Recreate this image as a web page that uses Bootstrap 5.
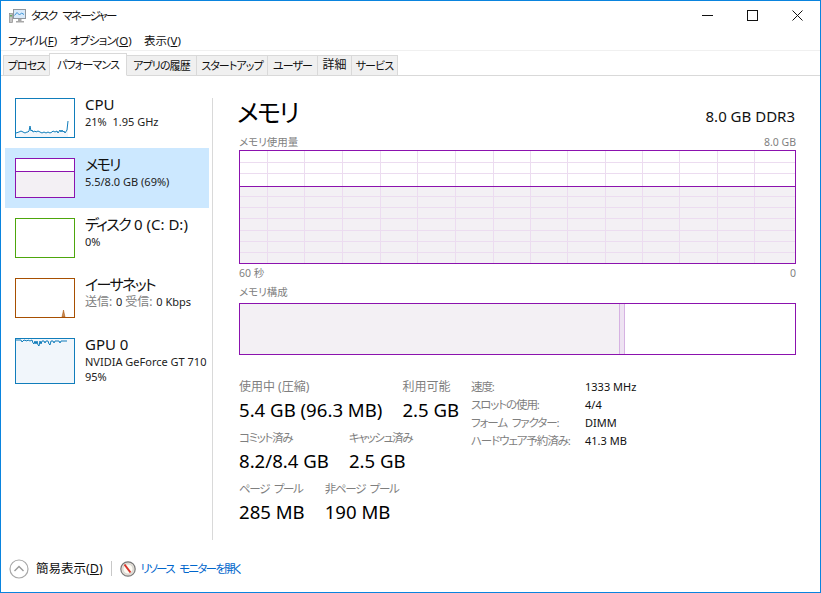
<!DOCTYPE html>
<html lang="ja">
<head>
<meta charset="utf-8">
<title>タスク マネージャー</title>
<link href="https://cdn.jsdelivr.net/npm/bootstrap@5.3.0/dist/css/bootstrap.min.css" rel="stylesheet">
<style>
html,body{margin:0;height:100%;overflow:hidden;background:#fff}
body{font-family:"Noto Sans","Noto Sans CJK JP",sans-serif;font-size:12px;color:#111;font-feature-settings:"palt";line-height:1.2}
.tm-window{width:821px;height:593px;border:1px solid #0a84de;display:flex;flex-direction:column}
.tm-title{height:29px;padding-left:8px;gap:4px;flex:none}
.tm-title-text{font-size:11.5px;letter-spacing:-1.8px;word-spacing:5px}
.tm-winbtns{margin-left:auto;gap:34px;padding-right:17px;padding-bottom:1px}
.tm-menu{height:20px;padding:2px 0 0 7px;gap:12.5px;flex:none;font-size:11.5px}
.tm-menu .tm-k1{letter-spacing:-.9px}
.tm-menu u{text-underline-offset:1px}
.tm-tabs{height:26px;flex:none;padding:2px 0 0 2px;border-top:1px solid #f0f0f0;margin:0;flex-wrap:nowrap;align-items:flex-start;position:relative}
.tm-tabs::after{content:"";position:absolute;left:0;right:0;bottom:0;height:1px;background:#d9d9d9}
.tm-tab{height:21px;margin-top:2px;background:#f0f0f0;border:1px solid #d9d9d9;border-left-width:0;display:flex;align-items:center;justify-content:center;font-size:11px;letter-spacing:-.9px;white-space:nowrap;position:relative}
.tm-tab:first-child{border-left-width:1px}
.tm-tab.tm-on{background:#fff;height:23px;margin-top:0;border-left-width:1px;border-bottom-color:#fff;z-index:1;margin-left:-1px}
.tm-w1{width:47px}.tm-w2{width:78px}.tm-w3{width:70px}.tm-w4{width:71px}.tm-w5{width:50px}.tm-w6{width:34px;letter-spacing:0;font-size:12px}.tm-w7{width:46px}
.tm-body{flex:1;display:flex;min-height:0}
.tm-side{width:207px;flex:none;margin:12px 0 0 4px}
.tm-divider{width:1px;flex:none;height:442px;margin:22px 0 0 0;background:#d9d9d9}
.tm-item{width:204px;height:60px;display:flex;padding:10px 0 0 10px;gap:10px}
.tm-item.tm-sel{background:#cce8ff}
.tm-item.tm-tall{height:66px}
.tm-item svg{flex:none;display:block}
.tm-name{font-size:15px;line-height:18px;margin-top:-3px;white-space:nowrap}
.tm-kn{letter-spacing:-1.6px}
.tm-sub{font-size:11px;line-height:15px;white-space:nowrap;color:#222;margin-top:1px}
.tm-sub .tm-dim{color:#7f7f7f;font-size:12px;margin-right:1px}
.tm-main{flex:1;padding:20px 0 0 26px;min-width:0}
.tm-col{width:557px}
.tm-head{height:32px}
.tm-h1{font-size:25px;line-height:32px;margin:0 0 0 -2px;font-weight:400;color:#000;letter-spacing:-1.8px}
.tm-model{font-size:15px;line-height:20px;color:#111;padding:0 1px 2px 0}
.tm-lab{font-size:10.5px;line-height:14px;color:#7f7f7f}
.tm-lab1{margin-top:5px;height:17px;align-items:center}
.tm-lab2{height:18px;align-items:center}
.tm-lab3{height:21px;line-height:20px}
.tm-chart{display:block;margin:0}
.tm-stats{margin-top:24px}
.tm-left{width:232px;flex:none}
.tm-srow{display:flex;gap:20px;height:51px;white-space:nowrap}
.tm-srow .tm-lab{font-size:12px;line-height:16px}
.tm-srow .tm-lab.tm-kt{font-size:11.5px;letter-spacing:-1.3px;word-spacing:3px}
.tm-val{font-size:18.6px;line-height:26px;color:#000;margin-top:2px}
.tm-spec{display:grid;grid-template-columns:114px auto;font-size:11px;line-height:18px;height:72px;margin-top:-1px}
.tm-spec .tm-k{color:#7f7f7f;font-size:11.5px;letter-spacing:-1.1px;word-spacing:3px;white-space:nowrap}
.tm-foot{height:47px;flex:none;padding-left:8px;font-size:12px}
.tm-less{font-size:12.5px;color:#111;margin-left:7px}
.tm-sep{width:1px;height:15px;background:#c8c8c8;margin:0 8px}
.tm-link{color:#0066cc;text-decoration:none;margin-left:5px;white-space:nowrap;letter-spacing:-1.7px;word-spacing:4px;font-size:11.5px}
</style>
</head>
<body>
<div class="tm-window">
  <div class="tm-title d-flex align-items-center">
    <svg width="18" height="17" viewBox="0 0 18 17"><rect x=".5" y="6.500" width="3" height="9" fill="#c4c4c4" stroke="#8a8a8a" stroke-width=".7"/><rect x="1.200" y="8" width="1.600" height="1.500" fill="#4aa54a"/><rect x="4.500" y="2.500" width="12" height="9" fill="#d9eafa" stroke="#8f979e"/><path d="M5.500 8.500l2.500-3 2.500 2.500 2-2 2.500 1.500" fill="none" stroke="#3c94d8"/><path d="M9 12h3.500v2H15v1.500H7V14h2z" fill="#a8a8a8"/></svg>
    <span class="tm-title-text">タスク マネージャー</span>
    <div class="tm-winbtns d-flex align-items-center">
      <svg width="11" height="11" viewBox="0 0 11 11"><path d="M0 5.500h11" stroke="#111"/></svg>
      <svg width="11" height="11" viewBox="0 0 11 11"><rect x=".5" y=".5" width="10" height="10" fill="none" stroke="#111"/></svg>
      <svg width="11" height="11" viewBox="0 0 11 11"><path d="M.5.500l10 10M10.500.500l-10 10" stroke="#111"/></svg>
    </div>
  </div>
  <div class="tm-menu d-flex align-items-center">
    <span><span class="tm-k1">ファイル</span>(<u>F</u>)</span><span><span class="tm-k1">オプション</span>(<u>O</u>)</span><span>表示(<u>V</u>)</span>
  </div>
  <div class="tm-tabs nav">
    <div class="tm-tab tm-w1">プロセス</div>
    <div class="tm-tab tm-on tm-w2">パフォーマンス</div>
    <div class="tm-tab tm-w3">アプリの履歴</div>
    <div class="tm-tab tm-w4">スタートアップ</div>
    <div class="tm-tab tm-w5">ユーザー</div>
    <div class="tm-tab tm-w6">詳細</div>
    <div class="tm-tab tm-w7">サービス</div>
  </div>
  <div class="tm-body">
    <div class="tm-side">
      <div class="tm-item">
        <svg width="60" height="40" viewBox="0 0 60 40"><path d="M1 35l3-1 2-1 2 1 2 1 2-1 1 0 1-1 1-5 1 5 1-1 1 2 2-1 1 1 2-1 2 1 2 1 2-1 2 1 2-1 2 1 2-1 1-1 2 1 2-1 1 2 2-3 1 2 1-2 1 2 1-1 1 2 2-3 1-9V39H1z" fill="#f1f6fb"/><path d="M1 35l3-1 2-1 2 1 2 1 2-1 1 0 1-1 1-5 1 5 1-1 1 2 2-1 1 1 2-1 2 1 2 1 2-1 2 1 2-1 2 1 2-1 1-1 2 1 2-1 1 2 2-3 1 2 1-2 1 2 1-1 1 2 2-3 1-9" fill="none" stroke="#117dbb"/><rect x=".5" y=".5" width="59" height="39" fill="none" stroke="#117dbb" /></svg>
        <div><div class="tm-name">CPU</div><div class="tm-sub">21%&nbsp; 1.95 GHz</div></div>
      </div>
      <div class="tm-item tm-sel">
        <svg width="60" height="40" viewBox="0 0 60 40"><rect x=".5" y=".5" width="59" height="39" fill="#fff" stroke="#8b12ae"/><rect x="1" y="13" width="58" height="26" fill="#f3f0f4"/><path d="M0 13.500h60" stroke="#8b12ae"/></svg>
        <div><div class="tm-name"><span class="tm-kn">メモリ</span></div><div class="tm-sub">5.5/8.0 GB (69%)</div></div>
      </div>
      <div class="tm-item">
        <svg width="60" height="40" viewBox="0 0 60 40"><rect x=".5" y=".5" width="59" height="39" fill="#fff" stroke="#4da60c"/></svg>
        <div><div class="tm-name"><span class="tm-kn">ディスク</span> 0 (C: D:)</div><div class="tm-sub">0%</div></div>
      </div>
      <div class="tm-item">
        <svg width="60" height="40" viewBox="0 0 60 40"><rect x=".5" y=".5" width="59" height="39" fill="#fff" stroke="#a74f01"/><path d="M47 39l1.500-7 1.500 7z" fill="#c98a55" stroke="#a74f01" stroke-width=".5"/></svg>
        <div><div class="tm-name"><span class="tm-kn">イーサネット</span></div><div class="tm-sub"><span class="tm-dim">送信:</span> 0 <span class="tm-dim">受信:</span> 0 Kbps</div></div>
      </div>
      <div class="tm-item tm-tall">
        <svg width="60" height="46" viewBox="0 0 60 46"><rect x=".5" y=".5" width="59" height="45" fill="#f1f6fb" stroke="#117dbb"/><path d="M1 2l3 0 2 0 1 2 2-2 3 1 1-1 2 1 2-1 1 3 1 1 1-3 1 3 1-3 1 4 1 1 1-5 1 3 1-3 2 0 1 2 1-2 2 0 1 3 1 1 1-4 2 0 1 2 1-2 4 0 1 2 1-2 4 0 2 0" fill="none" stroke="#117dbb"/></svg>
        <div><div class="tm-name">GPU 0</div><div class="tm-sub">NVIDIA GeForce GT 710<br>95%</div></div>
      </div>
    </div>
    <div class="tm-divider"></div>
    <div class="tm-main">
      <div class="tm-col">
        <div class="tm-head d-flex justify-content-between align-items-end">
          <h1 class="tm-h1">メモリ</h1><div class="tm-model">8.0 GB DDR3</div>
        </div>
        <div class="d-flex justify-content-between tm-lab tm-lab1"><span>メモリ使用量</span><span>8.0 GB</span></div>
        <svg class="tm-chart" width="557" height="114" viewBox="0 0 557 114">
          <rect x="0" y="36" width="557" height="78" fill="#f3f0f4"/>
          <path d="M28.500 0V114M65.500 0V114M103.500 0V114M141.500 0V114M178.500 0V114M216.500 0V114M254.500 0V114M291.500 0V114M328.500 0V114M366.500 0V114M403.500 0V114M440.500 0V114M478.500 0V114M515.500 0V114M0 12.500H557M0 23.500H557M0 46.500H557M0 57.500H557M0 68.500H557M0 80.500H557M0 91.500H557M0 102.500H557" stroke="#ecdcf0" fill="none"/>
          <path d="M0 36.500H557" stroke="#8b12ae"/>
          <rect x=".5" y=".5" width="556" height="113" fill="none" stroke="#8b12ae"/>
        </svg>
        <div class="d-flex justify-content-between tm-lab tm-lab2"><span>60 秒</span><span>0</span></div>
        <div class="tm-lab tm-lab3">メモリ構成</div>
        <svg class="tm-chart" width="557" height="52" viewBox="0 0 557 52">
          <rect x="0" y="0" width="380" height="52" fill="#f3f0f4"/>
          <rect x="380" y="0" width="6" height="52" fill="#eee3f2"/>
          <path d="M380.500 0V52M385.500 0V52" stroke="#d6b2e2"/>
          <rect x=".5" y=".5" width="556" height="51" fill="none" stroke="#8b12ae"/>
        </svg>
        <div class="tm-stats d-flex">
          <div class="tm-left">
            <div class="tm-srow"><div><div class="tm-lab">使用中 (圧縮)</div><div class="tm-val">5.4 GB (96.3 MB)</div></div><div><div class="tm-lab">利用可能</div><div class="tm-val">2.5 GB</div></div></div>
            <div class="tm-srow"><div><div class="tm-lab tm-kt">コミット済み</div><div class="tm-val">8.2/8.4 GB</div></div><div><div class="tm-lab tm-kt">キャッシュ済み</div><div class="tm-val">2.5 GB</div></div></div>
            <div class="tm-srow"><div><div class="tm-lab tm-kt">ページ プール</div><div class="tm-val">285 MB</div></div><div><div class="tm-lab tm-kt">非ページ プール</div><div class="tm-val">190 MB</div></div></div>
          </div>
          <div class="tm-spec">
            <span class="tm-k">速度:</span><span>1333 MHz</span>
            <span class="tm-k">スロットの使用:</span><span>4/4</span>
            <span class="tm-k">フォーム ファクター:</span><span>DIMM</span>
            <span class="tm-k">ハードウェア予約済み:</span><span>41.3 MB</span>
          </div>
        </div>
      </div>
    </div>
  </div>
  <div class="tm-foot d-flex align-items-center">
    <svg width="20" height="20" viewBox="0 0 20 20"><circle cx="10" cy="10" r="9" fill="#fff" stroke="#a8a8a8" stroke-width="1.200"/><path d="M5.500 12l4.500-4.500 4.500 4.500" fill="none" stroke="#9a9a9a" stroke-width="1.400"/></svg>
    <span class="tm-less">簡易表示(<u>D</u>)</span>
    <span class="tm-sep"></span>
    <svg width="16" height="16" viewBox="0 0 16 16"><circle cx="8" cy="8" r="7.200" fill="#e4e0d8" stroke="#777" stroke-width="1.200"/><circle cx="8" cy="8" r="5" fill="#fdfaf2" stroke="#bbb" stroke-width=".5"/><path d="M4.500 3.500l6 8" stroke="#d8342a" stroke-width="2"/></svg>
    <a class="tm-link" href="#">リソース モニターを開く</a>
  </div>
</div>
<script src="https://cdn.jsdelivr.net/npm/bootstrap@5.3.0/dist/js/bootstrap.bundle.min.js"></script>
</body>
</html>
